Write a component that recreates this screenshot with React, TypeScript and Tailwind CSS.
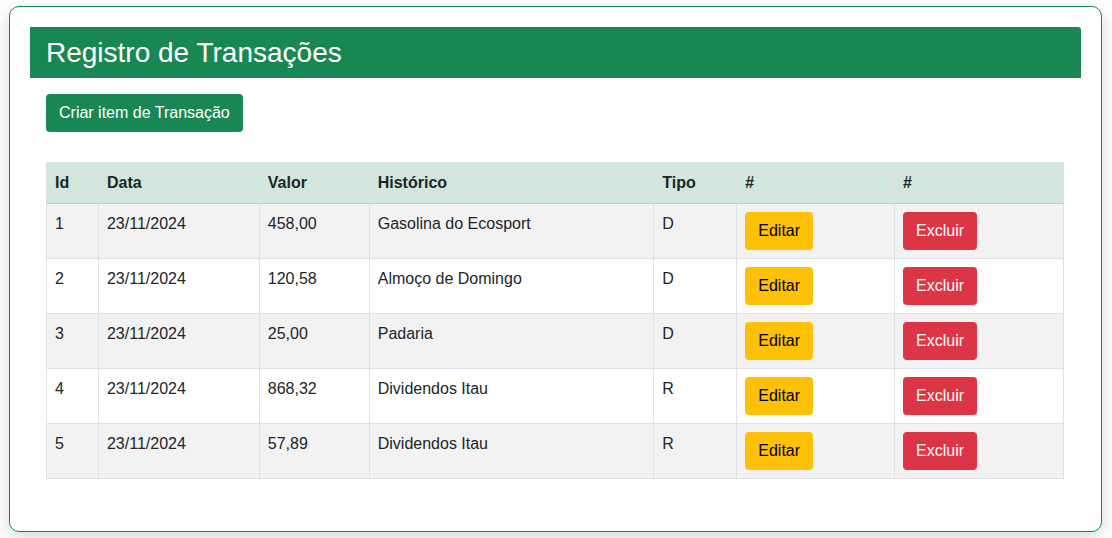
import React from "react";

const rows = [
  { id: 1, data: "23/11/2024", valor: "458,00", hist: "Gasolina do Ecosport", tipo: "D" },
  { id: 2, data: "23/11/2024", valor: "120,58", hist: "Almoço de Domingo", tipo: "D" },
  { id: 3, data: "23/11/2024", valor: "25,00", hist: "Padaria", tipo: "D" },
  { id: 4, data: "23/11/2024", valor: "868,32", hist: "Dividendos Itau", tipo: "R" },
  { id: 5, data: "23/11/2024", valor: "57,89", hist: "Dividendos Itau", tipo: "R" },
];

export default function App() {
  return (
    <div
      className="w-[1112px] h-[538px] bg-white pt-[6px] pl-[9px] text-[#212529]"
      style={{ fontFamily: '"Liberation Sans", Arial, sans-serif' }}
    >
      <div className="w-[1093px] h-[526px] border border-[#198754] rounded-[10px] bg-white p-[20px] shadow-[0_6px_20px_rgba(0,0,0,0.16)]">
        <div className="bg-[#198754] rounded-tr-[3px] h-[51px] flex items-center px-[16px]">
          <h2 className="text-white text-[28px] leading-[34px] font-normal">Registro de Transações</h2>
        </div>
        <div className="px-[16px] pt-[16px]">
          <button className="bg-[#198754] text-white text-[16px] leading-[24px] px-[13px] py-[7px] rounded-[4px]">
            Criar item de Transação
          </button>
          <table className="mt-[30px] w-[1018px] border-collapse text-[16px] leading-[24px]">
            <thead>
              <tr className="bg-[#d1e7dd] h-[41px]">
                {[
                  ["Id", "w-[52px]"],
                  ["Data", "w-[161px]"],
                  ["Valor", "w-[110px]"],
                  ["Histórico", "w-[285px]"],
                  ["Tipo", "w-[83px]"],
                  ["#", "w-[158px]"],
                  ["#", "w-[169px]"],
                ].map(([t, w], i) => (
                  <th
                    key={i}
                    className={`${w} text-left font-bold px-[8px] py-[8px] border border-[#dee2e6] border-b-[#c0d2c9] align-middle`}
                  >
                    {t}
                  </th>
                ))}
              </tr>
            </thead>
            <tbody>
              {rows.map((r, i) => (
                <tr key={r.id} className={`${i % 2 === 0 ? "bg-[#f2f2f2]" : "bg-white"} h-[55px]`}>
                  <td className="px-[8px] py-[8px] border border-[#dee2e6] align-top">{r.id}</td>
                  <td className="px-[8px] py-[8px] border border-[#dee2e6] align-top">{r.data}</td>
                  <td className="px-[8px] py-[8px] border border-[#dee2e6] align-top">{r.valor}</td>
                  <td className="px-[8px] py-[8px] border border-[#dee2e6] align-top">{r.hist}</td>
                  <td className="px-[8px] py-[8px] border border-[#dee2e6] align-top">{r.tipo}</td>
                  <td className="px-[8px] py-[8px] border border-[#dee2e6] align-top">
                    <button className="bg-[#ffc107] text-black px-[13px] py-[7px] rounded-[4px] leading-[24px]">
                      Editar
                    </button>
                  </td>
                  <td className="px-[8px] py-[8px] border border-[#dee2e6] align-top">
                    <button className="bg-[#dc3545] text-white px-[13px] py-[7px] rounded-[4px] leading-[24px]">
                      Excluir
                    </button>
                  </td>
                </tr>
              ))}
            </tbody>
          </table>
        </div>
      </div>
    </div>
  );
}
